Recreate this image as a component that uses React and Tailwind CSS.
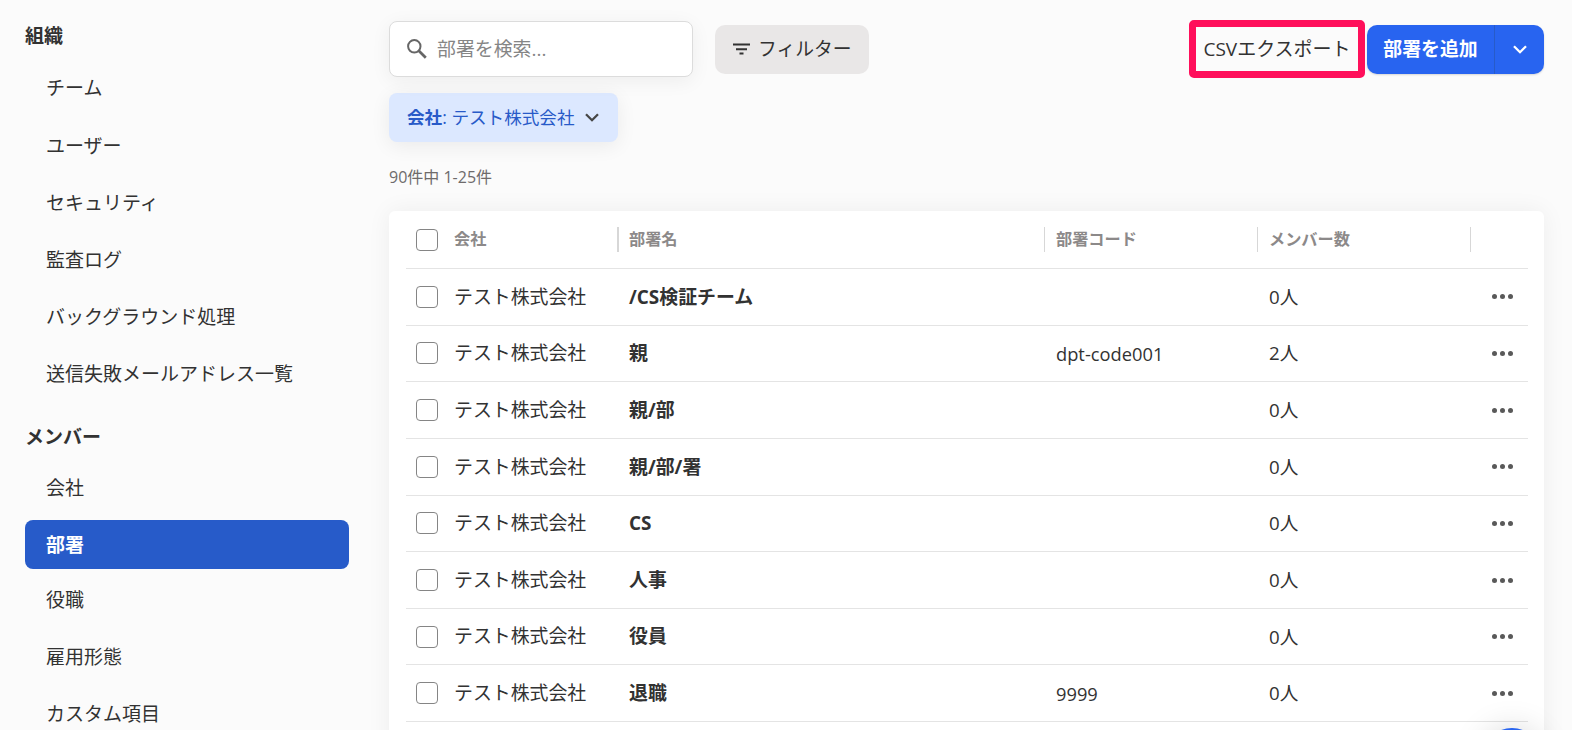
import React from 'react'

const navSections = [
  {
    title: '組織',
    items: ['チーム', 'ユーザー', 'セキュリティ', '監査ログ', 'バックグラウンド処理', '送信失敗メールアドレス一覧'],
  },
  {
    title: 'メンバー',
    items: ['会社', '部署', '役職', '雇用形態', 'カスタム項目'],
  },
]

const departments = [
  { name: '/CS検証チーム', code: '', members: 0 },
  { name: '親', code: 'dpt-code001', members: 2 },
  { name: '親/部', code: '', members: 0 },
  { name: '親/部/署', code: '', members: 0 },
  { name: 'CS', code: '', members: 0 },
  { name: '人事', code: '', members: 0 },
  { name: '役員', code: '', members: 0 },
  { name: '退職', code: '9999', members: 0 },
]

const columns = 'grid grid-cols-[48px_175px_427px_213px_213px_1fr] items-center'

function ChevronDown({ className }) {
  return (
    <svg viewBox="0 0 14 9" className={className} fill="none" stroke="currentColor" strokeWidth="2.3">
      <path d="M1 1.2 7 7.2 13 1.2" />
    </svg>
  )
}

function SearchIcon() {
  return (
    <svg viewBox="0 0 20 20" className="h-5 w-5 shrink-0 text-[#666]" fill="none" stroke="currentColor">
      <circle cx="7.3" cy="7.3" r="6.2" strokeWidth="2" />
      <path d="M11.8 11.8 18.8 18.8" strokeWidth="2.7" />
    </svg>
  )
}

function FilterIcon() {
  return (
    <svg viewBox="0 0 17 12" className="h-3 w-[17px] shrink-0" fill="currentColor">
      <path d="M0 0.4h17v2H0zM3 5.2h11v2H3zM6.5 9.6h4v2h-4z" />
    </svg>
  )
}

function Checkbox() {
  return (
    <div className="ml-2.5 h-[22px] w-[22px] rounded-[4px] border border-[#858585] bg-white" />
  )
}

function Sidebar({ active }) {
  return (
    <nav className="w-[389px] shrink-0 pr-10 pl-[25px]">
      {navSections.map((section, index) => (
        <div key={section.title} className={index === 0 ? 'pt-[21px]' : 'pt-[22px]'}>
          <h2
            className={`${index === 0 ? 'mb-[12px]' : 'mb-[11px]'} h-[30px] text-[19px] leading-[30px] font-bold`}
          >
            {section.title}
          </h2>
          <ul className="flex flex-col gap-1.5">
            {section.items.map(item => (
              <li
                key={item}
                className={
                  item === active
                    ? '-mb-px flex h-[49px] items-center rounded-lg bg-[#275bc9] pl-[21px] text-[19px] font-bold text-white'
                    : 'flex h-[51.2px] items-center pl-[21px] text-[19px]'
                }
              >
                {item}
              </li>
            ))}
          </ul>
        </div>
      ))}
    </nav>
  )
}

function Toolbar() {
  return (
    <div className="flex h-[58px] items-center">
      <div className="flex h-[56px] w-[304px] items-center gap-2.5 rounded-lg border border-[#dcdcdc] bg-white pl-[17px] shadow-[0_4px_20px_rgba(0,0,0,0.06)]">
        <SearchIcon />
        <span className="text-[18.9px] text-[#858585]">部署を検索...</span>
      </div>
      <button className="ml-[22px] flex h-[49px] w-[154px] items-center gap-2 rounded-[10px] bg-[#e9e7e7] pl-[18px] text-[18.8px]">
        <FilterIcon />
        フィルター
      </button>
      <button className="ml-auto flex h-[58px] w-[176px] items-center justify-center rounded-[5px] border-[7px] border-[#ff0f5b] text-[19px] whitespace-nowrap">
        CSVエクスポート
      </button>
      <div className="ml-0.5 flex h-[49px] w-[177px] overflow-hidden rounded-[10px] bg-[#2864f0] text-white shadow-[0_1px_2px_rgba(0,0,0,0.15)]">
        <button className="w-[128px] border-r border-[#275bc9] text-[18.9px] font-bold">部署を追加</button>
        <button className="flex flex-1 items-center justify-center">
          <ChevronDown className="h-[9px] w-3.5" />
        </button>
      </div>
    </div>
  )
}

function HeaderCell({ children, divider = 'border-l pl-[11px]' }) {
  return (
    <div className={`${divider} -ml-3 flex h-[25px] items-center border-[#d7d7d7] text-[16.2px] font-bold text-[#8c8989]`}>
      {children}
    </div>
  )
}

function DepartmentTable() {
  return (
    <div className="mt-[22px] h-[600px] rounded-md bg-white pr-4 pl-[17px] shadow-[0_0_24px_rgba(0,0,0,0.06)]">
      <div className={`${columns} h-[58px] border-b border-[#e4e4e4]`}>
        <Checkbox />
        <div className="text-[16.2px] font-bold text-[#8c8989]">会社</div>
        <HeaderCell divider="border-l-2 pl-2.5">部署名</HeaderCell>
        <HeaderCell>部署コード</HeaderCell>
        <HeaderCell>メンバー数</HeaderCell>
        <HeaderCell />
      </div>
      {departments.map(dept => (
        <div key={dept.name} className={`${columns} h-[56.65px] border-b border-[#e4e4e4] text-[18.9px]`}>
          <Checkbox />
          <div>テスト株式会社</div>
          <div className="font-bold">{dept.name}</div>
          <div className="text-[18.3px]">{dept.code}</div>
          <div className="text-[18.7px]">{dept.members}人</div>
          <div className="flex gap-[3px] pl-2.5">
            <span className="h-[5px] w-[5px] rounded-full bg-[#595959]" />
            <span className="h-[5px] w-[5px] rounded-full bg-[#595959]" />
            <span className="h-[5px] w-[5px] rounded-full bg-[#595959]" />
          </div>
        </div>
      ))}
    </div>
  )
}

export default function App() {
  return (
    <div
      lang="ja"
      className="relative flex h-[730px] w-[1572px] overflow-hidden bg-[#fbfbfb] font-['Open_Sans','Noto_Sans_CJK_JP',sans-serif] text-[#323232]"
    >
      <Sidebar active="部署" />
      <main className="w-[1155px] shrink-0 pt-5">
        <Toolbar />
        <button className="mt-[15px] flex h-[49px] w-[229px] items-center rounded-lg bg-[#dce8ff] pl-[18px] text-[17.6px] whitespace-nowrap text-[#285ac8] shadow-[0_4px_20px_rgba(0,0,0,0.07)]">
          <span className="font-bold">会社</span>:&nbsp;テスト株式会社
          <ChevronDown className="ml-2.5 h-[9px] w-3.5 text-[#464646]" />
        </button>
        <p className="mt-[23px] h-6 text-[16px] leading-6 text-[#6e6b6b]">90件中 1-25件</p>
        <DepartmentTable />
      </main>
      {/* Floating help button, mostly below the fold */}
      <div className="absolute top-[728px] left-[1482px] h-[60px] w-[60px] rounded-full bg-[#2864f0] shadow-[0_0_32px_rgba(0,0,0,0.15)]" />
    </div>
  )
}
